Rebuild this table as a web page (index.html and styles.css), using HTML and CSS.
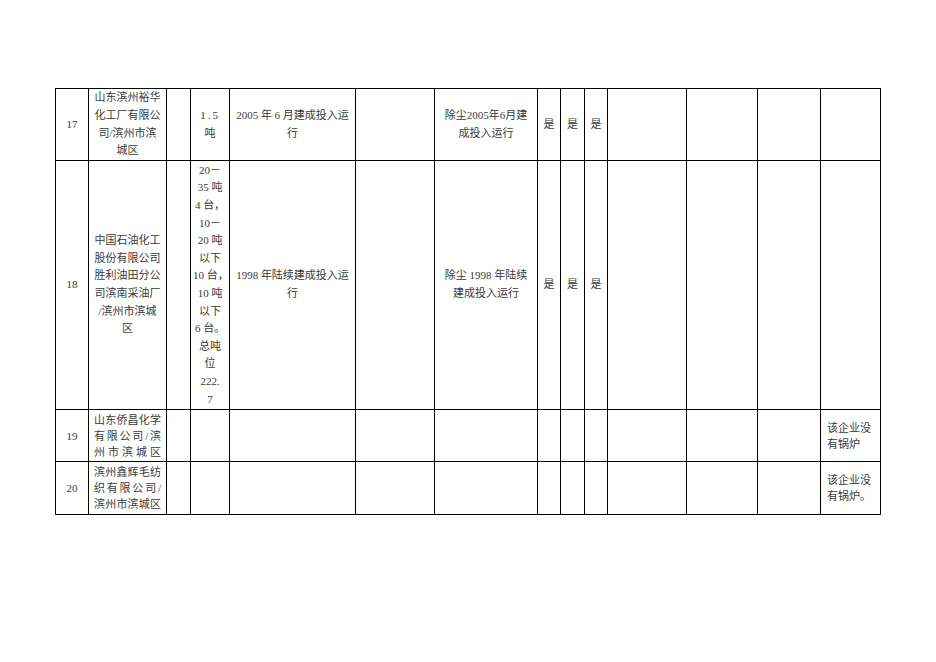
FILE: index.html
```html
<!DOCTYPE html>
<html lang="zh">
<head>
<meta charset="utf-8">
<link rel="stylesheet" href="styles.css">
</head>
<body>
<table class="grid">
  <colgroup>
    <col class="c1"><col class="c2"><col class="c3"><col class="c4"><col class="c5"><col class="c6"><col class="c7">
    <col class="c8"><col class="c9"><col class="c10"><col class="c11"><col class="c12"><col class="c13"><col class="c14">
  </colgroup>
  <tr class="r17">
    <td class="ctr">17</td>
    <td class="ctr">山东滨州裕华<br>化工厂有限公<br>司/滨州市滨<br>城区</td>
    <td></td>
    <td class="ctr"><span class="sp">1.5</span><br>吨</td>
    <td class="ctr">2005 年 6 月建成投入运<br>行</td>
    <td></td>
    <td class="ctr">除尘2005年6月建<br>成投入运行</td>
    <td class="ctr">是</td>
    <td class="ctr">是</td>
    <td class="ctr">是</td>
    <td></td><td></td><td></td><td></td>
  </tr>
  <tr class="r18">
    <td class="ctr">18</td>
    <td class="ctr">中国石油化工<br>股份有限公司<br>胜利油田分公<br>司滨南采油厂<br>/滨州市滨城<br>区</td>
    <td></td>
    <td class="ctr">20－<br>35 吨<br>4 台，<br>10－<br>20 吨<br>以下<br>10 台，<br>10 吨<br>以下<br>6 台。<br>总吨<br>位<br>222.<br>7</td>
    <td class="ctr">1998 年陆续建成投入运<br>行</td>
    <td></td>
    <td class="ctr">除尘 1998 年陆续<br>建成投入运行</td>
    <td class="ctr">是</td>
    <td class="ctr">是</td>
    <td class="ctr">是</td>
    <td></td><td></td><td></td><td></td>
  </tr>
  <tr class="r19">
    <td class="ctr">19</td>
    <td class="jus">山东侨昌化学<br>有限公司/滨<br>州市滨城区</td>
    <td></td><td></td><td></td><td></td><td></td><td></td><td></td><td></td><td></td><td></td><td></td>
    <td class="lft">该企业没<br>有锅炉</td>
  </tr>
  <tr class="r20">
    <td class="ctr">20</td>
    <td class="jus">滨州鑫辉毛纺<br>织有限公司/<br>滨州市滨城区</td>
    <td></td><td></td><td></td><td></td><td></td><td></td><td></td><td></td><td></td><td></td><td></td>
    <td class="lft">该企业没<br>有锅炉。</td>
  </tr>
</table>
</body>
</html>
```

FILE: styles.css
```css
html, body {
  margin: 0;
  background: #ffffff;
}
body {
  padding: 88px 0 0 55px;
  font-family: "Liberation Serif", "Noto Sans CJK SC", serif;
  font-size: 11px;
  color: #3a3a3a;
}
.grid {
  border-collapse: collapse;
  table-layout: fixed;
  width: 826px;
}
.grid td {
  border: 1px solid #000000;
  padding: 0 2px;
  line-height: 17.6px;
  vertical-align: middle;
  white-space: nowrap;
  overflow: hidden;
}
.c1 { width: 33px; }
.c2 { width: 78px; }
.c3 { width: 24px; }
.c4 { width: 39px; }
.c5 { width: 126px; }
.c6 { width: 79px; }
.c7 { width: 103px; }
.c8 { width: 23px; }
.c9 { width: 24px; }
.c10 { width: 23px; }
.c11 { width: 79px; }
.c12 { width: 71px; }
.c13 { width: 63px; }
.c14 { width: 60px; }
.r17 { height: 72px; }
.r18 { height: 249px; }
.r19 { height: 52px; }
.r20 { height: 53px; }
.grid .r19 td, .grid .r20 td { line-height: 16px; }
.ctr { text-align: center; }
.grid td.lft { text-align: left; padding-left: 6px; }
.grid td.jus {
  text-align: justify;
  text-align-last: justify;
  padding: 0 5px 0 5px;
  white-space: normal;
}
.sp { letter-spacing: 2px; }
```
